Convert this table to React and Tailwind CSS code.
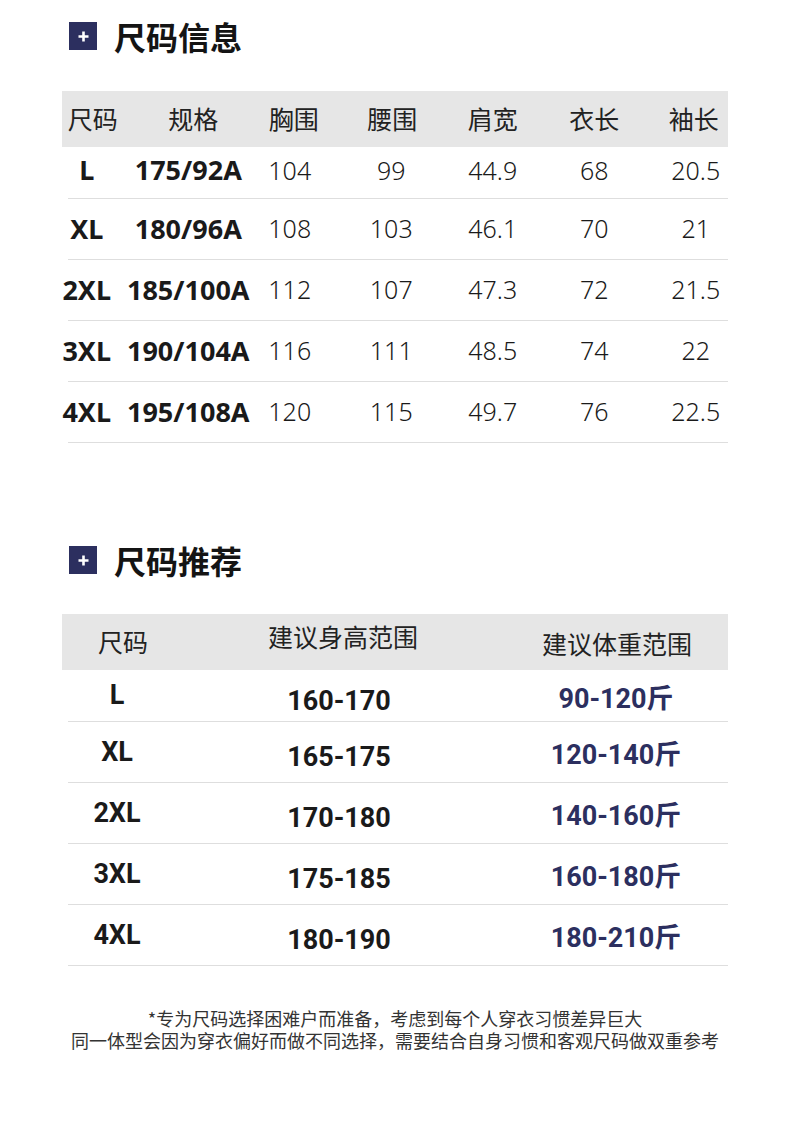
const sizeRows = [
  { size: "L", spec: "175/92A", chest: "104", waist: "99", shoulder: "44.9", length: "68", sleeve: "20.5" },
  { size: "XL", spec: "180/96A", chest: "108", waist: "103", shoulder: "46.1", length: "70", sleeve: "21" },
  { size: "2XL", spec: "185/100A", chest: "112", waist: "107", shoulder: "47.3", length: "72", sleeve: "21.5" },
  { size: "3XL", spec: "190/104A", chest: "116", waist: "111", shoulder: "48.5", length: "74", sleeve: "22" },
  { size: "4XL", spec: "195/108A", chest: "120", waist: "115", shoulder: "49.7", length: "76", sleeve: "22.5" },
];

const recRows = [
  { size: "L", height: "160-170", weight: "90-120" },
  { size: "XL", height: "165-175", weight: "120-140" },
  { size: "2XL", height: "170-180", weight: "140-160" },
  { size: "3XL", height: "175-185", weight: "160-180" },
  { size: "4XL", height: "180-190", weight: "180-210" },
];

const cjk = "font-['Noto_Sans_CJK_SC',sans-serif]";

const SectionTitle = ({ children }) => (
  <div className="flex items-center ml-[69px] gap-[17px]">
    <div className="w-[28px] h-[28px] bg-[#2c2f5f] flex items-center justify-center">
      <svg width="11" height="11" viewBox="0 0 11 11">
        <path d="M5.5 0.5v10M0.5 5.5h10" stroke="#fff" strokeWidth="2.6" />
      </svg>
    </div>
    <h2 className={`${cjk} text-[32px] font-bold text-[#141414] leading-none`}>{children}</h2>
  </div>
);

const Cell = ({ className = "", children }) => (
  <div className={`flex justify-center whitespace-nowrap ${className}`}>{children}</div>
);

const App = () => {
  return (
    <div className="w-[790px] h-[1122px] bg-white overflow-hidden">
      <div className="pt-[20px]">
        <SectionTitle>尺码信息</SectionTitle>
      </div>

      {/* size table */}
      <div className="ml-[62px] w-[666px] mt-[39px]">
        <div className={`h-[56px] bg-[#e6e6e6] ${cjk} text-[25px] text-[#222]`}>
          <div className="-ml-[26px] grid grid-cols-[repeat(7,101.5px)] h-full items-center">
            <Cell className="pl-[12px]">尺码</Cell>
            <Cell className="pl-[10px]">规格</Cell>
            <Cell className="pl-[8px]">胸围</Cell>
            <Cell className="pl-[2px]">腰围</Cell>
            <Cell>肩宽</Cell>
            <Cell>衣长</Cell>
            <Cell className="pr-[4px]">袖长</Cell>
          </div>
        </div>
        {sizeRows.map((r, i) => (
          <div
            key={r.size}
            className={`${i === 0 ? "h-[52px]" : "h-[61px]"} ml-[6px] border-b border-[#dedede] font-['Noto_Sans',sans-serif] text-[25px] text-[#1a1a1a]`}
          >
            <div className={`-ml-[32px] grid grid-cols-[repeat(7,101.5px)] h-full items-center ${i === 0 ? "pb-[4px]" : ""}`}>
              <Cell className="font-bold text-[27px]">{r.size}</Cell>
              <Cell className="font-bold text-[27px]">{r.spec}</Cell>
              <Cell className="font-light">{r.chest}</Cell>
              <Cell className="font-light">{r.waist}</Cell>
              <Cell className="font-light">{r.shoulder}</Cell>
              <Cell className="font-light">{r.length}</Cell>
              <Cell className="font-light">{r.sleeve}</Cell>
            </div>
          </div>
        ))}
      </div>

      <div className="mt-[101px]">
        <SectionTitle>尺码推荐</SectionTitle>
      </div>

      {/* recommendation table */}
      <div className="ml-[62px] w-[666px] mt-[38px]">
        <div className={`h-[56px] bg-[#e6e6e6] ${cjk} text-[25px] text-[#222] grid grid-cols-[110px_334px_222px]`}>
          <div className="text-center pl-[12px] pt-[9px]">尺码</div>
          <div className="text-center pl-[8px] pt-[4px]">建议身高范围</div>
          <div className="text-center pt-[11px]">建议体重范围</div>
        </div>
        {recRows.map((r, i) => (
          <div
            key={r.size}
            className={`${i === 0 ? "h-[52px]" : "h-[61px]"} ml-[6px] border-b border-[#dedede] grid grid-cols-[98px_346px_208px] items-center font-['Roboto',sans-serif] font-bold`}
          >
            <div className={`text-center text-[27px] text-[#1a1a1a] ${i === 0 ? "-mt-[2px]" : "mt-[1px]"}`}>{r.size}</div>
            <div className="text-center text-[27px] text-[#1a1a1a] mt-[11px]">{r.height}</div>
            <div className="text-center text-[27px] text-[#2c2f5f] mt-[5px]">
              {r.weight}
              <span className={cjk}>斤</span>
            </div>
          </div>
        ))}
      </div>

      <div className={`mt-[41px] ${cjk} text-[18px] leading-[22px] text-[#333] text-center`}>
        <p>*专为尺码选择困难户而准备，考虑到每个人穿衣习惯差异巨大</p>
        <p>同一体型会因为穿衣偏好而做不同选择，需要结合自身习惯和客观尺码做双重参考</p>
      </div>
    </div>
  );
};

export default App;
